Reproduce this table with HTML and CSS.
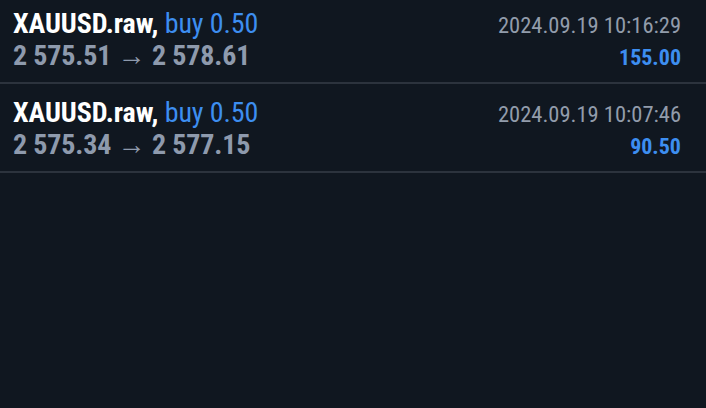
FILE: index.html
```html
<!DOCTYPE html>
<html>
<head>
<meta charset="utf-8">
<link rel="stylesheet" href="styles.css">
</head>
<body>
<div class="list">
  <div class="row">
    <div class="line">
      <div class="title"><span class="sym">XAUUSD.raw,</span> <span class="side">buy 0.50</span></div>
      <div class="time">2024.09.19 10:16:29</div>
    </div>
    <div class="line">
      <div class="prices">2 575.51 <span class="arrow">→</span> 2 578.61</div>
      <div class="profit">155.00</div>
    </div>
  </div>
  <div class="row">
    <div class="line">
      <div class="title"><span class="sym">XAUUSD.raw,</span> <span class="side">buy 0.50</span></div>
      <div class="time">2024.09.19 10:07:46</div>
    </div>
    <div class="line">
      <div class="prices">2 575.34 <span class="arrow">→</span> 2 577.15</div>
      <div class="profit">90.50</div>
    </div>
  </div>
</div>
</body>
</html>
```
FILE: styles.css
```css
html, body {
  margin: 0;
  padding: 0;
  background: #101720;
  width: 706px;
  height: 408px;
  overflow: hidden;
}
body {
  font-family: Roboto, sans-serif;
  font-stretch: condensed;
}
.list {
  display: flex;
  flex-direction: column;
  margin-top: -5px;
}
.row {
  display: flex;
  flex-direction: column;
  height: 89px;
  box-sizing: border-box;
  padding: 13.5px 25px 0 13px;
  border-bottom: 2px solid #2c333d;
}
.line {
  display: flex;
  justify-content: space-between;
  align-items: baseline;
  height: 32px;
  line-height: 30px;
  white-space: nowrap;
}
.title { font-size: 28px; letter-spacing: -0.1px; }
.sym { color: #ffffff; font-weight: 700; }
.side { color: #3d8ef0; font-weight: 400; }
.prices {
  font-size: 28px;
  color: #8e9aad;
  font-weight: 700;
  letter-spacing: -0.15px;
}
.arrow {
  font-weight: 400;
  font-size: 28px;
  vertical-align: 0;
  letter-spacing: 0;
}
.time {
  font-size: 22.5px;
  color: #929cab;
}
.profit {
  font-size: 22px;
  color: #3d8ef0;
  font-weight: 700;
}
```
